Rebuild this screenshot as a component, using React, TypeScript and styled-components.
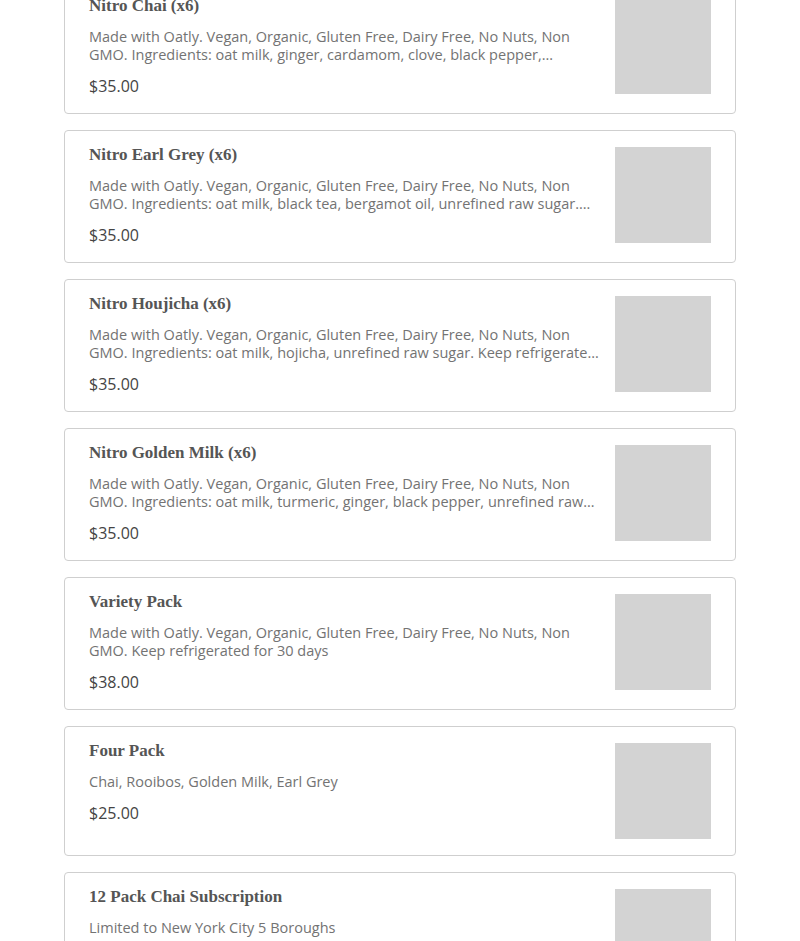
import styled, { createGlobalStyle } from 'styled-components'

const GlobalStyle = createGlobalStyle`
  html, body {
    margin: 0;
    padding: 0;
    background: #fff;
  }
  body {
    font-family: "Open Sans", "Liberation Sans", sans-serif;
  }
`;

type Product = {
  readonly name: string
  readonly description: string
  readonly price: string
}

const products: Product[] = [
  {
    name: 'Nitro Chai (x6)',
    description: 'Made with Oatly. Vegan, Organic, Gluten Free, Dairy Free, No Nuts, Non GMO. Ingredients: oat milk, ginger, cardamom, clove, black pepper, cinnamon, unrefined raw sugar. Keep refrigerated for 30 days',
    price: '$35.00'
  },
  {
    name: 'Nitro Earl Grey (x6)',
    description: 'Made with Oatly. Vegan, Organic, Gluten Free, Dairy Free, No Nuts, Non GMO. Ingredients: oat milk, black tea, bergamot oil, unrefined raw sugar. Keep refrigerated for 30 days',
    price: '$35.00'
  },
  {
    name: 'Nitro Houjicha (x6)',
    description: 'Made with Oatly. Vegan, Organic, Gluten Free, Dairy Free, No Nuts, Non GMO. Ingredients: oat milk, hojicha, unrefined raw sugar. Keep refrigerated for 30 days',
    price: '$35.00'
  },
  {
    name: 'Nitro Golden Milk (x6)',
    description: 'Made with Oatly. Vegan, Organic, Gluten Free, Dairy Free, No Nuts, Non GMO. Ingredients: oat milk, turmeric, ginger, black pepper, unrefined raw sugar. Keep refrigerated for 30 days',
    price: '$35.00'
  },
  {
    name: 'Variety Pack',
    description: 'Made with Oatly. Vegan, Organic, Gluten Free, Dairy Free, No Nuts, Non GMO. Keep refrigerated for 30 days',
    price: '$38.00'
  },
  {
    name: 'Four Pack',
    description: 'Chai, Rooibos, Golden Milk, Earl Grey',
    price: '$25.00'
  },
  {
    name: '12 Pack Chai Subscription',
    description: 'Limited to New York City 5 Boroughs',
    price: '$120.00'
  }
];

// the list is scrolled a little, so the first card is cut at the top
const List = styled.div`
  display: flex;
  flex-direction: column;
  gap: 16px;
  width: 672px;
  margin: -19.5px auto 0;
`;

const Card = styled.div`
  display: flex;
  gap: 16px;
  align-items: flex-start;
  padding: 16px 24px;
  border: 1px solid #cfcfcf;
  border-radius: 4px;
  background: #fff;
`;

const Info = styled.div`
  flex: 1;
  min-width: 0;
  display: flex;
  flex-direction: column;
`;

const Title = styled.h3`
  margin: -2px 0 12px;
  font-family: "Liberation Serif", "DejaVu Serif", serif;
  font-weight: bold;
  font-size: 17px;
  line-height: 20px;
  color: #555;
`;

const Description = styled.p`
  margin: 0 0 11px;
  font-size: 14.5px;
  line-height: 18px;
  color: #737373;
  display: -webkit-box;
  -webkit-line-clamp: 2;
  -webkit-box-orient: vertical;
  overflow: hidden;
`;

const Price = styled.div`
  font-size: 16px;
  line-height: 22px;
  color: #444;
`;

const Thumb = styled.div`
  flex: none;
  width: 96px;
  height: 96px;
  background: #d3d3d3;
`;

const App = () => {
  return (
    <>
      <GlobalStyle />
      <List>
        {products.map(p => (
          <Card key={p.name}>
            <Info>
              <Title>{p.name}</Title>
              <Description>{p.description}</Description>
              <Price>{p.price}</Price>
            </Info>
            <Thumb />
          </Card>
        ))}
      </List>
    </>
  );
}

export default App;
